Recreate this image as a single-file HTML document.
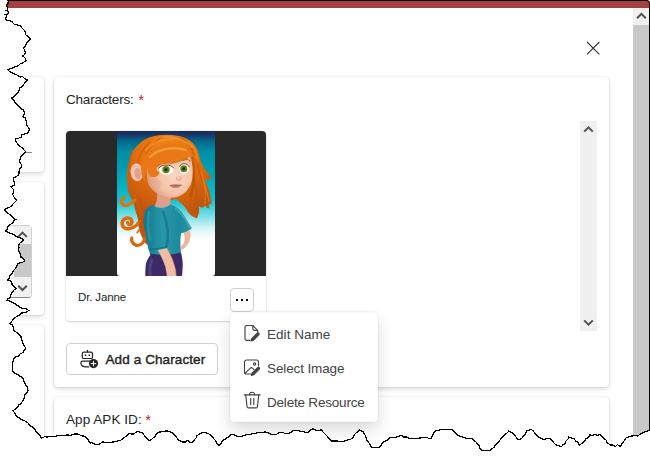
<!DOCTYPE html>
<html lang="en">
<head>
<meta charset="utf-8">
<title>Characters</title>
<style>
*{box-sizing:border-box;margin:0;padding:0}
html,body{width:650px;height:457px;overflow:hidden;background:#fff}
body{position:relative;font-family:"Liberation Sans",sans-serif;color:#242424;font-size:14px;line-height:20px}
.abs{position:absolute}
#topline{left:7px;top:0;width:643px;height:1px;background:#000}
#redbar{left:7px;top:1px;width:642px;height:7px;background:#a4403d}
#rightline{left:649px;top:0;width:1px;height:432px;background:#000}
#corner{left:645px;top:0;width:5px;height:5px;overflow:hidden;background:#fff}
/* outer page scrollbar */
#psb{left:633px;top:8px;width:16px;height:449px;background:#c8c8c8}
#psb .btn{left:0;top:0;width:16px;height:17px;background:#f0f0f0}
/* cards */
.card{position:absolute;background:#fff;border-radius:4px;box-shadow:0 0 2px rgba(0,0,0,.12),0 2px 4px rgba(0,0,0,.14)}
#c1{left:54px;top:77px;width:555px;height:310px}
#c2{left:54px;top:397px;width:555px;height:120px}
#l1{left:-20px;top:77px;width:64px;height:95px}
#l2{left:-20px;top:182px;width:64px;height:133px}
#l3{left:-20px;top:325px;width:64px;height:160px}
.lbl{position:absolute;left:66px;white-space:nowrap;color:#242424;font-size:13.5px;line-height:20px}
.req{color:#c50f1f}
/* inner scroller */
#isb{left:580px;top:121px;width:17px;height:210px;background:#f0f0f0}
/* character tile */
#tile{left:66px;top:131px;width:200px;height:190px;border-radius:4px;background:#fff;box-shadow:0 1px 2px rgba(0,0,0,.16),0 0 2px rgba(0,0,0,.12);overflow:hidden}
#tile .pic{position:absolute;left:0;top:0;width:200px;height:145px;background:#292929}
#tname{left:78px;top:289px;font-size:11.5px;letter-spacing:-.15px;line-height:16px;color:#242424;white-space:nowrap}
#more{left:230px;top:288px;width:24px;height:24px;border:1px solid #d1d1d1;border-radius:4px;background:#fff}
#more i{position:absolute;top:10px;width:2px;height:2px;background:#000}
/* add button */
#add{left:66px;top:343px;width:152px;height:32px;border:1px solid #d1d1d1;border-radius:4px;background:#fff}
#add span{position:absolute;left:38.500px;top:6px;font-weight:normal;-webkit-text-stroke:.4px #242424;letter-spacing:.1px;font-size:13.5px;line-height:20px;white-space:nowrap;color:#242424}
/* menu */
#menu{left:230px;top:312px;width:148px;height:110px;background:#fff;border-radius:4px;border:1px solid rgba(0,0,0,.02);box-shadow:0 8px 16px rgba(0,0,0,.14),0 0 2px rgba(0,0,0,.12)}
#menu .it{position:absolute;left:36px;white-space:nowrap;font-size:13.5px;line-height:20px;color:#424242}
#ta{left:-20px;top:225px;width:52px;height:73px;border:1px solid #d1d1d1;border-bottom-color:#8a8a8a;border-radius:4px;background:#fff}
#tsb{left:14px;top:226px;width:17px;height:71px;background:#f0f0f0;border-bottom-right-radius:3px}
#inl{left:-20px;top:152px;width:52px;height:1px;background:#8a8a8a}
svg{display:block}
</style>
</head>
<body>
<!-- window chrome -->
<div class="abs" id="redbar"></div>
<div class="abs" id="topline"></div>
<div class="abs" id="psb"><div class="abs btn"></div>
<svg class="abs" style="left:0;top:0" width="16" height="17" viewBox="0 0 16 17"><path d="M4 10.3 L8.4 5.9 L12.8 10.3" fill="none" stroke="#505050" stroke-width="2"/></svg>
</div>
<div class="abs" id="rightline"></div>
<div class="abs" id="corner"><div style="position:absolute;right:0;top:0;width:10px;height:10px;background:#a4403d;border-top:1px solid #000;border-right:1px solid #000;border-top-right-radius:3.500px"></div></div>

<!-- close X -->
<svg class="abs" style="left:583px;top:38px" width="20" height="20" viewBox="0 0 20 20"><path d="M4 4 L16.4 16.4 M16.4 4 L4 16.4" stroke="#333" stroke-width="1.1" fill="none"/></svg>

<!-- left column cards -->
<div class="card" id="l1"></div>
<div class="card" id="l2"></div>
<div class="card" id="l3"></div>

<div class="abs" id="ta"></div>
<div class="abs" id="tsb"><div class="abs" style="left:0;top:18px;width:17px;height:33px;background:#c8c8c8"></div>
<svg class="abs" style="left:0;top:0" width="17" height="18" viewBox="0 0 17 18"><path d="M4.200 10.900L8.500 6.600L12.800 10.900" fill="none" stroke="#505050" stroke-width="2"/></svg>
<svg class="abs" style="left:0;top:53px" width="17" height="18" viewBox="0 0 17 18"><path d="M4.200 6.700L8.500 11L12.800 6.700" fill="none" stroke="#505050" stroke-width="2"/></svg>
</div>
<div class="abs" id="inl"></div>
<!-- main card -->
<div class="card" id="c1"></div>
<div class="card" id="c2"></div>
<div class="lbl" style="top:90px"><span style="letter-spacing:-.2px">Characters:</span><span class="req" style="position:absolute;left:72.500px;top:-.5px;font-size:14px">*</span></div>
<div class="lbl" style="top:410px"><span style="letter-spacing:.06px">App APK ID:</span><span class="req" style="position:absolute;left:79.500px;top:-.5px;font-size:14px">*</span></div>

<div class="abs" id="isb">
<svg class="abs" style="left:0;top:0" width="17" height="17" viewBox="0 0 17 17"><path d="M4.200 10.600L8.500 6.300L12.800 10.600" fill="none" stroke="#505050" stroke-width="2"/></svg>
<svg class="abs" style="left:0;top:193px" width="17" height="17" viewBox="0 0 17 17"><path d="M4.200 6.400L8.500 10.700L12.800 6.400" fill="none" stroke="#505050" stroke-width="2"/></svg>
</div>

<div class="abs" id="tile"><div class="pic">
<svg class="abs" id="portrait" style="left:51px;top:0" width="98" height="145" viewBox="117 131 98 145">
<defs>
<linearGradient id="bg" x1="0" y1="131" x2="0" y2="276" gradientUnits="userSpaceOnUse">
<stop offset="0" stop-color="#1c2858"/><stop offset=".03" stop-color="#173a6c"/><stop offset=".07" stop-color="#06688a"/><stop offset=".14" stop-color="#008ea6"/><stop offset=".3" stop-color="#00a4b8"/><stop offset=".476" stop-color="#14c0cc"/><stop offset=".586" stop-color="#7adfe6"/><stop offset=".67" stop-color="#d4f5f7"/><stop offset=".74" stop-color="#ffffff"/><stop offset="1" stop-color="#ffffff"/>
</linearGradient>
<radialGradient id="hairg" cx="168" cy="152" r="62" gradientUnits="userSpaceOnUse">
<stop offset="0" stop-color="#f28c1e"/><stop offset=".45" stop-color="#e6700c"/><stop offset="1" stop-color="#c25608"/>
</radialGradient>
<linearGradient id="shirtg" x1="143" y1="0" x2="192" y2="0" gradientUnits="userSpaceOnUse">
<stop offset="0" stop-color="#15748a"/><stop offset=".4" stop-color="#2698aa"/><stop offset=".75" stop-color="#1d8a9c"/><stop offset="1" stop-color="#2a96a4"/>
</linearGradient>
<radialGradient id="faceg" cx="176" cy="176" r="30" gradientUnits="userSpaceOnUse">
<stop offset="0" stop-color="#fcd9c4"/><stop offset=".6" stop-color="#f4c2a8"/><stop offset="1" stop-color="#d8967e"/>
</radialGradient>
<filter id="soft" x="-5%" y="-5%" width="110%" height="110%"><feGaussianBlur stdDeviation=".5"/></filter>
<clipPath id="pc"><path d="M117 131H215V273a3 3 0 0 1-3 3H120a3 3 0 0 1-3-3Z"/></clipPath>
</defs>
<g clip-path="url(#pc)">
<rect x="117" y="131" width="98" height="145" fill="url(#bg)"/>
<g filter="url(#soft)">
<!-- back hair -->
<path d="M129 162C131 152 138 142 148 138C158 134 174 133.500 184 137.500C193 141 198 148 199.500 157C201 164 205 170 211.500 177.500C209 180.500 207 180.500 204.500 179.800C207 184 210 190 211.500 203.500C210.500 204.500 209.500 204.700 208.400 204.500C209 206 209.400 207.500 209.400 208.700C207.500 208 206 207 205.300 205.500C204 207 202.500 207.600 201.100 207.600C199.500 207 198.500 206 198 204.500C199 207 199.500 209.500 199 211.800C198.800 214 198 216.500 197 218C194.500 217.500 192.500 216.500 190.700 214.900C189 213.500 187.500 211.500 186.600 209.700L184 206L176 199L160 203L150 208C148 214 147 220 147 226C147 232 148 240 146.500 245C144 242 141.500 236 139.500 231C138 226 138.500 221 137.500 217C136 213 134.500 208 134.200 205C133 201 130 196 128.800 192.700C127.800 190 127.300 187 127.500 184C126 177 126.500 169 129 162Z" fill="url(#hairg)"/>
<!-- curls -->
<path d="M135 200C131 204.500 126 206.500 123.300 204.800C120.800 203 121.200 199 124.200 197.500" fill="none" stroke="#e27210" stroke-width="3.300" stroke-linecap="round"/>
<path d="M139.500 221.500C136.500 227 130 229.800 125.500 228.300C121.300 226.800 121 221.300 124.600 218.900C128.200 216.600 132.600 219 131.800 222.500C131.200 225 128.200 225 127.600 222.600" fill="none" stroke="#de6c0e" stroke-width="3.500" stroke-linecap="round"/>
<path d="M144.500 239C143.500 243.500 139 246.500 135.600 245C132.600 243.600 131.400 240.500 131.800 238" fill="none" stroke="#d8660c" stroke-width="3.200" stroke-linecap="round"/><path d="M140 229L137.300 232.500" fill="none" stroke="#d8660c" stroke-width="1.800" stroke-linecap="round"/>
<!-- strands shading -->
<path d="M192.500 158C194.500 170 194.500 184 191 196" fill="none" stroke="#a8480a" stroke-width="2.600" opacity=".5" stroke-linecap="round"/>
<path d="M135 202C138 212 141 222 143 236M140 198C143 206 144.500 216 145 226" fill="none" stroke="#b8500a" stroke-width="1.600" opacity=".55" stroke-linecap="round"/>
<path d="M196 160C200 172 204 184 206 198M192 170C196 184 198 198 197 212" fill="none" stroke="#b8500a" stroke-width="1.600" opacity=".5" stroke-linecap="round"/>
<path d="M132 150C129 160 128.500 172 130 184" fill="none" stroke="#c45a0a" stroke-width="2" opacity=".5" stroke-linecap="round"/>
<path d="M188 141C194 146 197 154 198 162" fill="none" stroke="#f59a34" stroke-width="1.800" opacity=".45" stroke-linecap="round"/>
<path d="M150 142C142 150 138 158 137 164M160 138.500C152 144 147 151 145 158M180 137.500C187 141 192 148 194 155" fill="none" stroke="#b8500a" stroke-width="1.500" opacity=".45" stroke-linecap="round"/>
<path d="M164 136.800C175 136.500 186 140.500 192 147.500" fill="none" stroke="#f8a848" stroke-width="1.800" opacity=".5" stroke-linecap="round"/>
<path d="M201 172C204 182 207 192 209 201M203 180C205 188 206 196 205 204" fill="none" stroke="#f29636" stroke-width="1.300" opacity=".5" stroke-linecap="round"/>
<!-- neck -->
<path d="M157 193L171 197.500C170 201 170 203 171 205C166 208.500 160 208.500 155 205.500C157 201 157.500 197 157 193Z" fill="#dea088"/>
<!-- ear -->
<ellipse cx="136.800" cy="172.300" rx="6.200" ry="9" fill="#f3c2ae" transform="rotate(-8 136.800 172.300)"/>
<ellipse cx="137.800" cy="173.500" rx="3.200" ry="5.600" fill="#e2a08c" transform="rotate(-8 137.800 173.500)"/>
<!-- face -->
<path d="M147 176C146 168 149 158 158 154C168 150 183 150 190 156C193 163 193.500 174 191.500 182C189 190 183 196 175 197.500C166 198.500 155 194 150 187C148 184 147 180 147 176Z" fill="url(#faceg)"/>
<ellipse cx="156" cy="184" rx="5" ry="6" fill="#e8a48c" opacity=".45"/>
<!-- bangs -->
<path d="M191.500 155C186 160 176 163 165 164C160 164.500 157 166 156.500 169C156.500 171 158 172 159.500 171C160 175 156 178 152 177C148.500 176 147 172 148 168C145 171 144 176 145 181C141 176 140 168 142 161C146 150 160 143 175 143C184 143.500 190 148 191.500 155Z" fill="#e97812"/>
<path d="M150 157C158 149 172 146 186 150" fill="none" stroke="#f7a544" stroke-width="2.400" stroke-linecap="round" opacity=".75"/>
<path d="M146 150C152 143 162 139 174 139" fill="none" stroke="#f59a34" stroke-width="2.200" stroke-linecap="round" opacity=".6"/>
<path d="M158 166C164 165.500 176 163.500 188 158" fill="none" stroke="#b8500a" stroke-width="1" opacity=".6"/>
<!-- eyes -->
<ellipse cx="166.200" cy="169.500" rx="7.400" ry="5.300" fill="#fdfaf4"/>
<ellipse cx="184.300" cy="168.400" rx="4.900" ry="5.300" fill="#fdfaf4"/>
<circle cx="166" cy="169.600" r="3.700" fill="#63801c"/><circle cx="166" cy="169.600" r="1.600" fill="#1f2a0c"/>
<circle cx="183.800" cy="168.700" r="3.500" fill="#63801c"/><circle cx="183.800" cy="168.700" r="1.500" fill="#1f2a0c"/>
<path d="M158.800 168C161 164.500 171 163.500 173.600 168M179.600 166.500C181 162.500 187.500 162.500 189.200 166.800" fill="none" stroke="#7a4424" stroke-width="1" stroke-linecap="round"/>
<!-- brow -->
<path d="M183.500 160.500C185.500 159 188.500 159.200 190 160.800" fill="none" stroke="#d8660c" stroke-width="1.200" stroke-linecap="round"/>
<!-- nose + mouth -->
<ellipse cx="178.800" cy="178.600" rx="3" ry="2.500" fill="#eeb098"/>
<circle cx="178.400" cy="177.600" r="1.100" fill="#fde2d2"/>
<path d="M169.600 185.400C172 184 178 183.800 181.800 185C179 188.600 173 189 169.600 185.400Z" fill="#c67c6c"/>
<path d="M169.600 185.400C173 186.200 178 186 181.800 185" fill="none" stroke="#a85c50" stroke-width=".7"/>
<!-- right arm behind -->
<path d="M183.600 232.400L190.200 230.800C191 236 190.500 240 188.500 243.300C186.500 246.500 184 249 181.100 249.900L180.800 246C183.500 244.500 185 241.500 184.800 238.500C184.600 236 184 234 183.600 232.400Z" fill="#efb69c"/>
<!-- shirt -->
<path d="M152.800 205C156 209 166 209 170.200 204.200L175.200 206.700C179 209 182 212 183.600 215L191.900 228.300C189 231 185 232.500 181.100 233.300C180.200 238 180.200 246 181.100 253.200C172 256 160 256.500 150.300 254.900C148 248 146 240 145.300 233.300C143.600 227 143.200 221 143.600 218.300C143.800 214 144.500 211 146.100 209.200C148 207 150 205.500 152.800 205Z" fill="url(#shirtg)"/>
<path d="M163 212C168 224 169 236 166.500 247" fill="none" stroke="#116478" stroke-width="2.600" opacity=".5" stroke-linecap="round"/>
<path d="M148.600 249.100C154 249.500 160 248.500 166.100 246.600" fill="none" stroke="#116478" stroke-width="1.200" opacity=".7"/>
<path d="M176 209C182 214 187 221 190 227.500" fill="none" stroke="#4cb6c0" stroke-width="2" opacity=".55" stroke-linecap="round"/>
<path d="M149 212C147.500 220 148 230 150 240" fill="none" stroke="#3aa6b4" stroke-width="2.400" opacity=".5" stroke-linecap="round"/>
<!-- pants -->
<path d="M150 253.500C160 255.500 172 255 181 252.500C182.500 259 183 263 182.700 266.600L182 277L145.300 277C145.300 271 145.500 266 146.100 263.200C147 260 148.500 257.500 150.300 255.200Z" fill="#3a2b66"/>
<path d="M151.500 260C150 265 149.500 271 150 276" fill="none" stroke="#5c4a92" stroke-width="3.200" opacity=".6" stroke-linecap="round"/>
<!-- front arm -->
<path d="M157.800 249.900L166.900 248.300C170 254 172.500 259 173.600 263.200C175 267 176 271 176.100 276.500L166.900 276.500C166.500 272 165.800 269 165.300 266.600C163 260 160 254 157.800 249.900Z" fill="#f2bca2"/>
<path d="M166.900 248.300C170 254 172.500 259 173.600 263.200C175 267 176 271 176.100 276.500" fill="none" stroke="#d8967e" stroke-width="1" opacity=".7"/>
</g>
</g>
</svg>
</div></div>
<div class="abs" id="tname">Dr. Janne</div>
<div class="abs" id="more"><i style="left:5px"></i><i style="left:10px"></i><i style="left:15px"></i></div>

<div class="abs" id="add"><svg class="abs" style="left:11px;top:4.400px" width="24" height="24" viewBox="78 348 24 24">
<path d="M87.500 350.300V352" stroke="#242424" stroke-width="1.200" fill="none" stroke-linecap="round"/>
<rect x="82.300" y="352.100" width="10.200" height="6.400" rx="1.600" fill="none" stroke="#242424" stroke-width="1.200"/>
<circle cx="85.500" cy="355.200" r=".85" fill="#242424"/><circle cx="89.300" cy="355.200" r=".85" fill="#242424"/>
<path d="M89.500 361.200H82.400A1.500 1.500 0 0 0 80.900 362.700V363.300C80.900 365.700 83.400 366.900 86.600 366.900H88.800" fill="none" stroke="#242424" stroke-width="1.200" stroke-linecap="round"/>
<circle cx="93.500" cy="363.600" r="4.600" fill="#242424"/>
<path d="M91.200 363.600H95.800M93.500 361.300V365.900" stroke="#fff" stroke-width="1" fill="none" stroke-linecap="round"/>
</svg><span>Add a Character</span></div>

<div class="abs" id="menu">
<svg class="abs" style="left:11px;top:10px" width="20" height="20" viewBox="0 0 20 20" fill="none" stroke="#424242" stroke-width="1.150" stroke-linecap="round" stroke-linejoin="round">
<path d="M8 17.300H4.500A1.500 1.500 0 0 1 3 15.800V4A1.500 1.500 0 0 1 4.500 2.500H10.800L15.600 7.300V9.500"/><path d="M10.800 2.700V5.800A1.500 1.500 0 0 0 12.300 7.300H15.400"/>
<path d="M15.200 10.200L9.600 15.800L9 18L11.200 17.400L16.800 11.800A1.100 1.100 0 0 0 15.200 10.200Z" fill="#424242"/>
</svg>
<svg class="abs" style="left:11px;top:44px" width="20" height="20" viewBox="0 0 20 20" fill="none" stroke="#424242" stroke-width="1.150" stroke-linecap="round" stroke-linejoin="round">
<path d="M8.500 17H4.500A2 2 0 0 1 2.500 15V5A2 2 0 0 1 4.500 3H14.500A2 2 0 0 1 16.500 5V9"/>
<circle cx="12.600" cy="7" r="1.100"/>
<path d="M3.200 16.200L8.400 11.200A1.500 1.500 0 0 1 10.500 11.200L12 12.600"/>
<path d="M15.600 10.600L10 16.200L9.400 18.400L11.600 17.800L17.200 12.200A1.100 1.100 0 0 0 15.600 10.600Z" fill="#424242"/>
</svg>
<svg class="abs" style="left:10.500px;top:77px" width="20" height="20" viewBox="0 0 20 20" fill="none" stroke="#424242" stroke-width="1.150" stroke-linecap="round" stroke-linejoin="round">
<path d="M2.300 4.900H18.200"/><path d="M7.600 4.700A2.500 2.500 0 0 1 12.600 4.700"/>
<path d="M3.800 5.100L5 16.500A1.500 1.500 0 0 0 6.500 17.900H14A1.500 1.500 0 0 0 15.500 16.500L16.700 5.100"/>
<path d="M8.700 8.200V14.600M11.800 8.200V14.600"/>
</svg>
<div class="it" style="top:12px;letter-spacing:.04px">Edit Name</div>
<div class="it" style="top:46px;letter-spacing:-.12px">Select Image</div>
<div class="it" style="top:80px;letter-spacing:-.2px">Delete Resource</div>
</div>

<svg class="abs" id="torn" style="left:0;top:0;z-index:50" width="650" height="457" viewBox="0 0 650 457">
<polygon points="-5,-5 8.0,0.0 8.2,1.8 8.0,3.5 6.5,4.5 7.0,6.5 7.5,8.0 7.5,10.0 6.5,10.5 8.5,11.5 8.5,13.3 6.6,14.3 4.5,14.3 6.3,15.0 6.3,17.0 5.3,18.5 6.5,20.0 9.0,20.5 12.0,21.5 12.8,22.9 14.0,24.0 17.0,25.0 20.0,25.5 21.5,26.4 22.0,28.0 23.2,29.3 24.5,30.5 25.4,32.7 26.0,35.0 28.0,36.5 29.7,37.5 30.5,39.4 28.3,41.5 26.2,43.7 25.5,46.2 23.6,48.1 24.6,50.3 25.4,52.5 24.5,54.6 22.7,56.0 24.9,57.8 26.2,60.3 24.5,61.7 22.7,63.0 20.2,63.8 18.3,65.8 15.7,66.5 13.2,67.9 10.4,68.4 7.9,69.6 9.3,71.4 11.3,72.3 13.1,73.5 15.4,74.2 17.5,75.2 19.8,76.9 22.8,76.8 24.9,79.0 27.6,79.6 25.7,82.0 23.8,84.3 21.7,86.6 19.2,88.4 19.1,90.6 18.4,92.7 16.4,93.7 14.9,95.4 13.7,97.0 11.9,98.0 13.7,100.4 15.5,102.8 17.5,105.0 19.4,106.6 21.0,108.5 23.2,109.8 24.5,112.0 24.2,114.4 22.7,116.4 25.4,118.1 26.2,120.7 26.2,123.4 27.0,125.6 28.4,127.4 29.4,129.5 28.9,131.3 28.0,133.0 25.9,133.6 24.0,134.4 21.9,135.0 21.0,137.3 18.4,138.2 15.7,138.6 15.7,140.7 16.6,142.6 18.6,145.0 21.0,147.0 22.9,148.4 24.2,150.3 25.9,151.9 24.2,153.4 22.3,154.7 21.0,156.6 20.0,159.2 19.6,161.9 21.0,163.9 21.9,166.2 19.8,168.5 18.9,171.5 19.2,173.3 18.4,175.0 16.3,176.4 14.0,177.6 13.6,180.2 14.5,182.9 14.0,185.5 12.4,186.2 10.8,186.9 13.1,189.0 13.5,191.7 12.6,194.2 13.7,196.4 15.0,198.5 16.6,200.3 15.1,202.0 13.3,203.5 12.2,205.6 9.7,207.3 6.9,208.3 4.4,210.0 6.3,211.8 8.4,213.6 10.5,215.2 12.3,216.6 13.7,218.5 15.7,219.6 14.0,220.5 13.1,222.2 11.4,223.7 9.5,225.0 7.9,226.6 7.1,229.1 5.2,231.0 8.0,232.4 11.0,233.5 14.0,234.5 16.1,236.4 18.6,237.5 21.3,238.1 23.6,239.7 22.0,241.6 20.0,243.1 18.4,245.0 19.1,247.6 18.4,250.2 19.3,252.5 20.6,254.7 21.0,257.2 23.3,258.6 24.8,260.7 22.6,262.4 19.8,262.7 17.5,264.2 16.5,266.8 14.9,269.1 13.1,271.2 12.1,273.3 10.3,275.0 9.6,277.3 7.9,280.0 9.9,280.3 11.4,281.7 11.9,283.4 12.2,285.2 14.4,287.0 16.6,288.7 14.1,290.0 12.2,292.2 10.9,294.7 10.5,297.5 8.4,298.4 7.0,300.1 9.8,301.1 12.3,302.6 15.0,303.9 17.5,305.4 20.1,307.2 22.9,308.6 26.3,308.9 28.9,310.6 26.4,311.9 23.8,312.7 21.0,313.2 18.9,315.3 16.3,316.8 14.0,318.5 12.4,320.2 11.3,322.2 9.6,323.7 11.8,324.5 13.1,326.4 13.7,328.5 14.0,330.7 16.4,332.3 18.6,334.3 21.0,336.0 21.3,339.1 22.5,341.9 23.6,344.7 24.7,346.5 25.9,348.2 24.2,350.3 22.7,352.6 20.2,353.9 18.4,356.1 15.7,357.0 13.8,359.1 12.9,361.7 12.5,364.8 12.4,367.9 12.9,371.0 14.7,373.0 17.2,374.2 19.3,375.8 21.6,377.1 23.4,379.2 24.4,382.2 25.7,385.0 27.0,386.8 27.8,388.8 28.0,391.0 26.6,393.0 24.6,394.4 24.5,397.4 23.4,400.3 22.0,402.0 20.7,403.9 18.7,405.0 17.3,407.4 15.2,409.2 12.9,410.8 14.5,412.5 15.4,414.6 16.4,416.7 19.0,417.3 20.8,419.5 23.3,420.3 25.7,421.3 28.2,423.2 30.0,425.7 32.1,426.8 33.9,428.4 35.2,430.0 36.2,431.8 38.0,433.7 39.9,435.6 41.1,438.0 43.2,437.6 44.8,436.3 47.2,437.1 49.7,436.5 52.2,436.7 54.6,436.8 57.0,435.9 59.5,435.6 62.0,435.6 64.5,435.5 67.4,434.9 70.4,435.5 73.3,434.3 76.2,433.9 79.2,434.3 81.0,435.7 83.3,436.0 85.4,436.8 87.4,438.5 88.6,440.9 90.3,442.9 92.5,442.8 94.4,444.1 96.5,444.6 98.8,444.2 100.8,443.1 102.6,441.7 105.6,442.6 108.8,442.9 111.2,442.2 113.7,441.9 116.2,441.7 118.1,440.4 120.4,440.4 122.3,439.2 124.4,437.4 126.7,435.9 128.5,433.8 131.0,433.8 133.4,434.3 135.7,432.5 138.3,431.4 140.6,432.7 143.2,433.1 144.2,435.4 145.9,437.1 147.5,438.9 149.4,440.5 151.5,439.6 153.1,438.0 155.0,436.3 156.1,434.0 158.0,432.3 160.5,431.9 162.9,431.3 165.4,431.1 168.0,431.1 170.5,431.8 172.8,433.1 174.7,434.9 176.3,437.0 177.7,439.2 180.0,440.9 182.6,442.2 185.3,442.0 187.5,440.5 189.3,441.6 191.0,442.9 193.0,441.4 194.6,439.6 196.1,437.8 197.2,435.5 199.2,434.3 201.2,433.0 203.4,432.3 205.6,432.6 207.6,433.2 209.5,434.3 211.9,436.1 213.5,438.6 215.7,440.5 216.8,443.3 218.9,445.4 220.7,444.1 221.7,442.1 223.1,440.5 225.7,438.8 228.3,437.0 230.5,434.8 233.5,434.7 236.2,436.0 239.1,436.3 242.1,436.2 244.9,435.4 247.7,434.3 250.6,434.2 253.4,433.5 256.3,433.1 259.1,432.2 262.1,432.6 264.9,431.8 267.8,432.6 270.5,434.2 273.5,434.8 276.2,434.6 278.4,433.0 280.9,432.3 283.4,432.7 285.7,433.9 288.3,433.8 290.9,432.5 293.2,430.6 295.7,430.4 298.2,430.6 300.6,431.4 303.1,431.2 305.5,432.6 308.0,432.3 309.6,431.1 310.5,429.4 313.3,429.0 316.0,430.1 318.7,430.4 321.5,429.9 323.2,432.2 325.2,434.3 327.4,436.5 329.3,438.9 331.4,441.2 334.2,440.9 337.0,440.9 339.8,441.7 342.7,441.7 345.4,440.7 348.1,439.9 350.9,439.2 353.0,437.5 354.1,435.1 355.8,433.1 358.0,431.6 359.5,429.4 361.1,431.0 363.2,431.8 364.8,434.5 366.0,437.5 366.9,440.5 368.8,442.8 370.5,445.2 371.8,447.8 374.3,447.9 376.7,447.5 379.2,447.8 380.8,445.7 382.1,443.4 384.2,441.7 387.0,440.3 389.1,438.0 392.1,437.4 395.2,437.3 397.3,436.6 399.4,436.2 401.4,435.5 403.7,436.9 406.4,437.1 408.8,438.0 411.2,438.8 413.7,438.5 416.2,438.7 418.6,438.3 421.1,437.8 423.5,437.3 426.1,437.1 428.4,438.2 430.9,438.7 432.2,435.8 433.6,432.9 435.8,430.6 438.3,430.6 440.7,429.3 443.2,429.4 446.1,429.4 448.9,429.7 451.8,429.4 453.8,431.5 456.1,433.3 458.0,435.5 460.5,436.4 462.9,437.2 465.4,438.0 467.8,438.8 470.4,438.3 472.8,439.2 474.4,440.9 476.3,442.3 477.7,444.2 479.2,446.1 479.8,448.5 481.4,450.3 484.0,450.4 486.6,450.7 489.2,450.7 491.6,449.0 493.9,447.3 495.7,444.9 497.3,442.9 499.1,441.1 500.6,439.1 502.2,437.1 504.4,435.1 506.8,433.3 508.8,431.1 510.8,432.1 512.7,433.2 514.4,435.2 516.2,437.2 517.9,439.2 520.0,439.4 521.8,438.4 523.8,435.9 525.8,433.4 527.1,430.5 529.2,430.4 531.0,429.2 533.4,431.2 535.3,433.7 537.5,435.8 539.4,437.6 541.7,438.8 544.1,439.7 546.6,438.6 549.3,438.4 551.8,440.2 553.7,442.7 555.8,444.9 558.7,445.4 561.1,447.0 562.8,445.0 565.0,443.6 565.8,441.1 567.8,439.4 568.9,437.1 571.5,438.1 574.2,438.4 575.5,440.9 578.0,442.4 579.4,444.9 581.3,443.8 583.0,442.5 584.6,441.0 586.0,438.7 588.5,437.4 589.8,435.0 592.5,435.5 595.0,434.4 597.7,435.3 600.3,434.5 601.8,435.9 603.0,437.5 604.5,438.7 606.0,440.0 607.0,442.4 609.0,444.0 610.9,445.0 613.0,445.0 615.5,446.5 617.5,444.5 619.0,446.0 621.0,446.0 622.3,443.1 624.3,440.6 626.0,438.0 628.0,437.3 630.0,436.5 633.0,435.8 636.0,435.5 638.0,436.0 639.8,434.4 642.0,433.5 644.4,432.1 647.1,431.4 649.5,430.0 655,430 655,465 -5,465" fill="#fff"/>
<polyline points="8.0,0.0 8.2,1.8 8.0,3.5 6.5,4.5 7.0,6.5 7.5,8.0 7.5,10.0 6.5,10.5 8.5,11.5 8.5,13.3 6.6,14.3 4.5,14.3 6.3,15.0 6.3,17.0 5.3,18.5 6.5,20.0 9.0,20.5 12.0,21.5 12.8,22.9 14.0,24.0 17.0,25.0 20.0,25.5 21.5,26.4 22.0,28.0 23.2,29.3 24.5,30.5 25.4,32.7 26.0,35.0 28.0,36.5 29.7,37.5 30.5,39.4 28.3,41.5 26.2,43.7 25.5,46.2 23.6,48.1 24.6,50.3 25.4,52.5 24.5,54.6 22.7,56.0 24.9,57.8 26.2,60.3 24.5,61.7 22.7,63.0 20.2,63.8 18.3,65.8 15.7,66.5 13.2,67.9 10.4,68.4 7.9,69.6 9.3,71.4 11.3,72.3 13.1,73.5 15.4,74.2 17.5,75.2 19.8,76.9 22.8,76.8 24.9,79.0 27.6,79.6 25.7,82.0 23.8,84.3 21.7,86.6 19.2,88.4 19.1,90.6 18.4,92.7 16.4,93.7 14.9,95.4 13.7,97.0 11.9,98.0 13.7,100.4 15.5,102.8 17.5,105.0 19.4,106.6 21.0,108.5 23.2,109.8 24.5,112.0 24.2,114.4 22.7,116.4 25.4,118.1 26.2,120.7 26.2,123.4 27.0,125.6 28.4,127.4 29.4,129.5 28.9,131.3 28.0,133.0 25.9,133.6 24.0,134.4 21.9,135.0 21.0,137.3 18.4,138.2 15.7,138.6 15.7,140.7 16.6,142.6 18.6,145.0 21.0,147.0 22.9,148.4 24.2,150.3 25.9,151.9 24.2,153.4 22.3,154.7 21.0,156.6 20.0,159.2 19.6,161.9 21.0,163.9 21.9,166.2 19.8,168.5 18.9,171.5 19.2,173.3 18.4,175.0 16.3,176.4 14.0,177.6 13.6,180.2 14.5,182.9 14.0,185.5 12.4,186.2 10.8,186.9 13.1,189.0 13.5,191.7 12.6,194.2 13.7,196.4 15.0,198.5 16.6,200.3 15.1,202.0 13.3,203.5 12.2,205.6 9.7,207.3 6.9,208.3 4.4,210.0 6.3,211.8 8.4,213.6 10.5,215.2 12.3,216.6 13.7,218.5 15.7,219.6 14.0,220.5 13.1,222.2 11.4,223.7 9.5,225.0 7.9,226.6 7.1,229.1 5.2,231.0 8.0,232.4 11.0,233.5 14.0,234.5 16.1,236.4 18.6,237.5 21.3,238.1 23.6,239.7 22.0,241.6 20.0,243.1 18.4,245.0 19.1,247.6 18.4,250.2 19.3,252.5 20.6,254.7 21.0,257.2 23.3,258.6 24.8,260.7 22.6,262.4 19.8,262.7 17.5,264.2 16.5,266.8 14.9,269.1 13.1,271.2 12.1,273.3 10.3,275.0 9.6,277.3 7.9,280.0 9.9,280.3 11.4,281.7 11.9,283.4 12.2,285.2 14.4,287.0 16.6,288.7 14.1,290.0 12.2,292.2 10.9,294.7 10.5,297.5 8.4,298.4 7.0,300.1 9.8,301.1 12.3,302.6 15.0,303.9 17.5,305.4 20.1,307.2 22.9,308.6 26.3,308.9 28.9,310.6 26.4,311.9 23.8,312.7 21.0,313.2 18.9,315.3 16.3,316.8 14.0,318.5 12.4,320.2 11.3,322.2 9.6,323.7 11.8,324.5 13.1,326.4 13.7,328.5 14.0,330.7 16.4,332.3 18.6,334.3 21.0,336.0 21.3,339.1 22.5,341.9 23.6,344.7 24.7,346.5 25.9,348.2 24.2,350.3 22.7,352.6 20.2,353.9 18.4,356.1 15.7,357.0 13.8,359.1 12.9,361.7 12.5,364.8 12.4,367.9 12.9,371.0 14.7,373.0 17.2,374.2 19.3,375.8 21.6,377.1 23.4,379.2 24.4,382.2 25.7,385.0 27.0,386.8 27.8,388.8 28.0,391.0 26.6,393.0 24.6,394.4 24.5,397.4 23.4,400.3 22.0,402.0 20.7,403.9 18.7,405.0 17.3,407.4 15.2,409.2 12.9,410.8 14.5,412.5 15.4,414.6 16.4,416.7 19.0,417.3 20.8,419.5 23.3,420.3 25.7,421.3 28.2,423.2 30.0,425.7 32.1,426.8 33.9,428.4 35.2,430.0 36.2,431.8 38.0,433.7 39.9,435.6 41.1,438.0 43.2,437.6 44.8,436.3 47.2,437.1 49.7,436.5 52.2,436.7 54.6,436.8 57.0,435.9 59.5,435.6 62.0,435.6 64.5,435.5 67.4,434.9 70.4,435.5 73.3,434.3 76.2,433.9 79.2,434.3 81.0,435.7 83.3,436.0 85.4,436.8 87.4,438.5 88.6,440.9 90.3,442.9 92.5,442.8 94.4,444.1 96.5,444.6 98.8,444.2 100.8,443.1 102.6,441.7 105.6,442.6 108.8,442.9 111.2,442.2 113.7,441.9 116.2,441.7 118.1,440.4 120.4,440.4 122.3,439.2 124.4,437.4 126.7,435.9 128.5,433.8 131.0,433.8 133.4,434.3 135.7,432.5 138.3,431.4 140.6,432.7 143.2,433.1 144.2,435.4 145.9,437.1 147.5,438.9 149.4,440.5 151.5,439.6 153.1,438.0 155.0,436.3 156.1,434.0 158.0,432.3 160.5,431.9 162.9,431.3 165.4,431.1 168.0,431.1 170.5,431.8 172.8,433.1 174.7,434.9 176.3,437.0 177.7,439.2 180.0,440.9 182.6,442.2 185.3,442.0 187.5,440.5 189.3,441.6 191.0,442.9 193.0,441.4 194.6,439.6 196.1,437.8 197.2,435.5 199.2,434.3 201.2,433.0 203.4,432.3 205.6,432.6 207.6,433.2 209.5,434.3 211.9,436.1 213.5,438.6 215.7,440.5 216.8,443.3 218.9,445.4 220.7,444.1 221.7,442.1 223.1,440.5 225.7,438.8 228.3,437.0 230.5,434.8 233.5,434.7 236.2,436.0 239.1,436.3 242.1,436.2 244.9,435.4 247.7,434.3 250.6,434.2 253.4,433.5 256.3,433.1 259.1,432.2 262.1,432.6 264.9,431.8 267.8,432.6 270.5,434.2 273.5,434.8 276.2,434.6 278.4,433.0 280.9,432.3 283.4,432.7 285.7,433.9 288.3,433.8 290.9,432.5 293.2,430.6 295.7,430.4 298.2,430.6 300.6,431.4 303.1,431.2 305.5,432.6 308.0,432.3 309.6,431.1 310.5,429.4 313.3,429.0 316.0,430.1 318.7,430.4 321.5,429.9 323.2,432.2 325.2,434.3 327.4,436.5 329.3,438.9 331.4,441.2 334.2,440.9 337.0,440.9 339.8,441.7 342.7,441.7 345.4,440.7 348.1,439.9 350.9,439.2 353.0,437.5 354.1,435.1 355.8,433.1 358.0,431.6 359.5,429.4 361.1,431.0 363.2,431.8 364.8,434.5 366.0,437.5 366.9,440.5 368.8,442.8 370.5,445.2 371.8,447.8 374.3,447.9 376.7,447.5 379.2,447.8 380.8,445.7 382.1,443.4 384.2,441.7 387.0,440.3 389.1,438.0 392.1,437.4 395.2,437.3 397.3,436.6 399.4,436.2 401.4,435.5 403.7,436.9 406.4,437.1 408.8,438.0 411.2,438.8 413.7,438.5 416.2,438.7 418.6,438.3 421.1,437.8 423.5,437.3 426.1,437.1 428.4,438.2 430.9,438.7 432.2,435.8 433.6,432.9 435.8,430.6 438.3,430.6 440.7,429.3 443.2,429.4 446.1,429.4 448.9,429.7 451.8,429.4 453.8,431.5 456.1,433.3 458.0,435.5 460.5,436.4 462.9,437.2 465.4,438.0 467.8,438.8 470.4,438.3 472.8,439.2 474.4,440.9 476.3,442.3 477.7,444.2 479.2,446.1 479.8,448.5 481.4,450.3 484.0,450.4 486.6,450.7 489.2,450.7 491.6,449.0 493.9,447.3 495.7,444.9 497.3,442.9 499.1,441.1 500.6,439.1 502.2,437.1 504.4,435.1 506.8,433.3 508.8,431.1 510.8,432.1 512.7,433.2 514.4,435.2 516.2,437.2 517.9,439.2 520.0,439.4 521.8,438.4 523.8,435.9 525.8,433.4 527.1,430.5 529.2,430.4 531.0,429.2 533.4,431.2 535.3,433.7 537.5,435.8 539.4,437.6 541.7,438.8 544.1,439.7 546.6,438.6 549.3,438.4 551.8,440.2 553.7,442.7 555.8,444.9 558.7,445.4 561.1,447.0 562.8,445.0 565.0,443.6 565.8,441.1 567.8,439.4 568.9,437.1 571.5,438.1 574.2,438.4 575.5,440.9 578.0,442.4 579.4,444.9 581.3,443.8 583.0,442.5 584.6,441.0 586.0,438.7 588.5,437.4 589.8,435.0 592.5,435.5 595.0,434.4 597.7,435.3 600.3,434.5 601.8,435.9 603.0,437.5 604.5,438.7 606.0,440.0 607.0,442.4 609.0,444.0 610.9,445.0 613.0,445.0 615.5,446.5 617.5,444.5 619.0,446.0 621.0,446.0 622.3,443.1 624.3,440.6 626.0,438.0 628.0,437.3 630.0,436.5 633.0,435.8 636.0,435.5 638.0,436.0 639.8,434.4 642.0,433.5 644.4,432.1 647.1,431.4 649.5,430.0" fill="none" stroke="#000" stroke-width="1.25" stroke-linejoin="miter" shape-rendering="crispEdges"/>
</svg>
</body>
</html>
